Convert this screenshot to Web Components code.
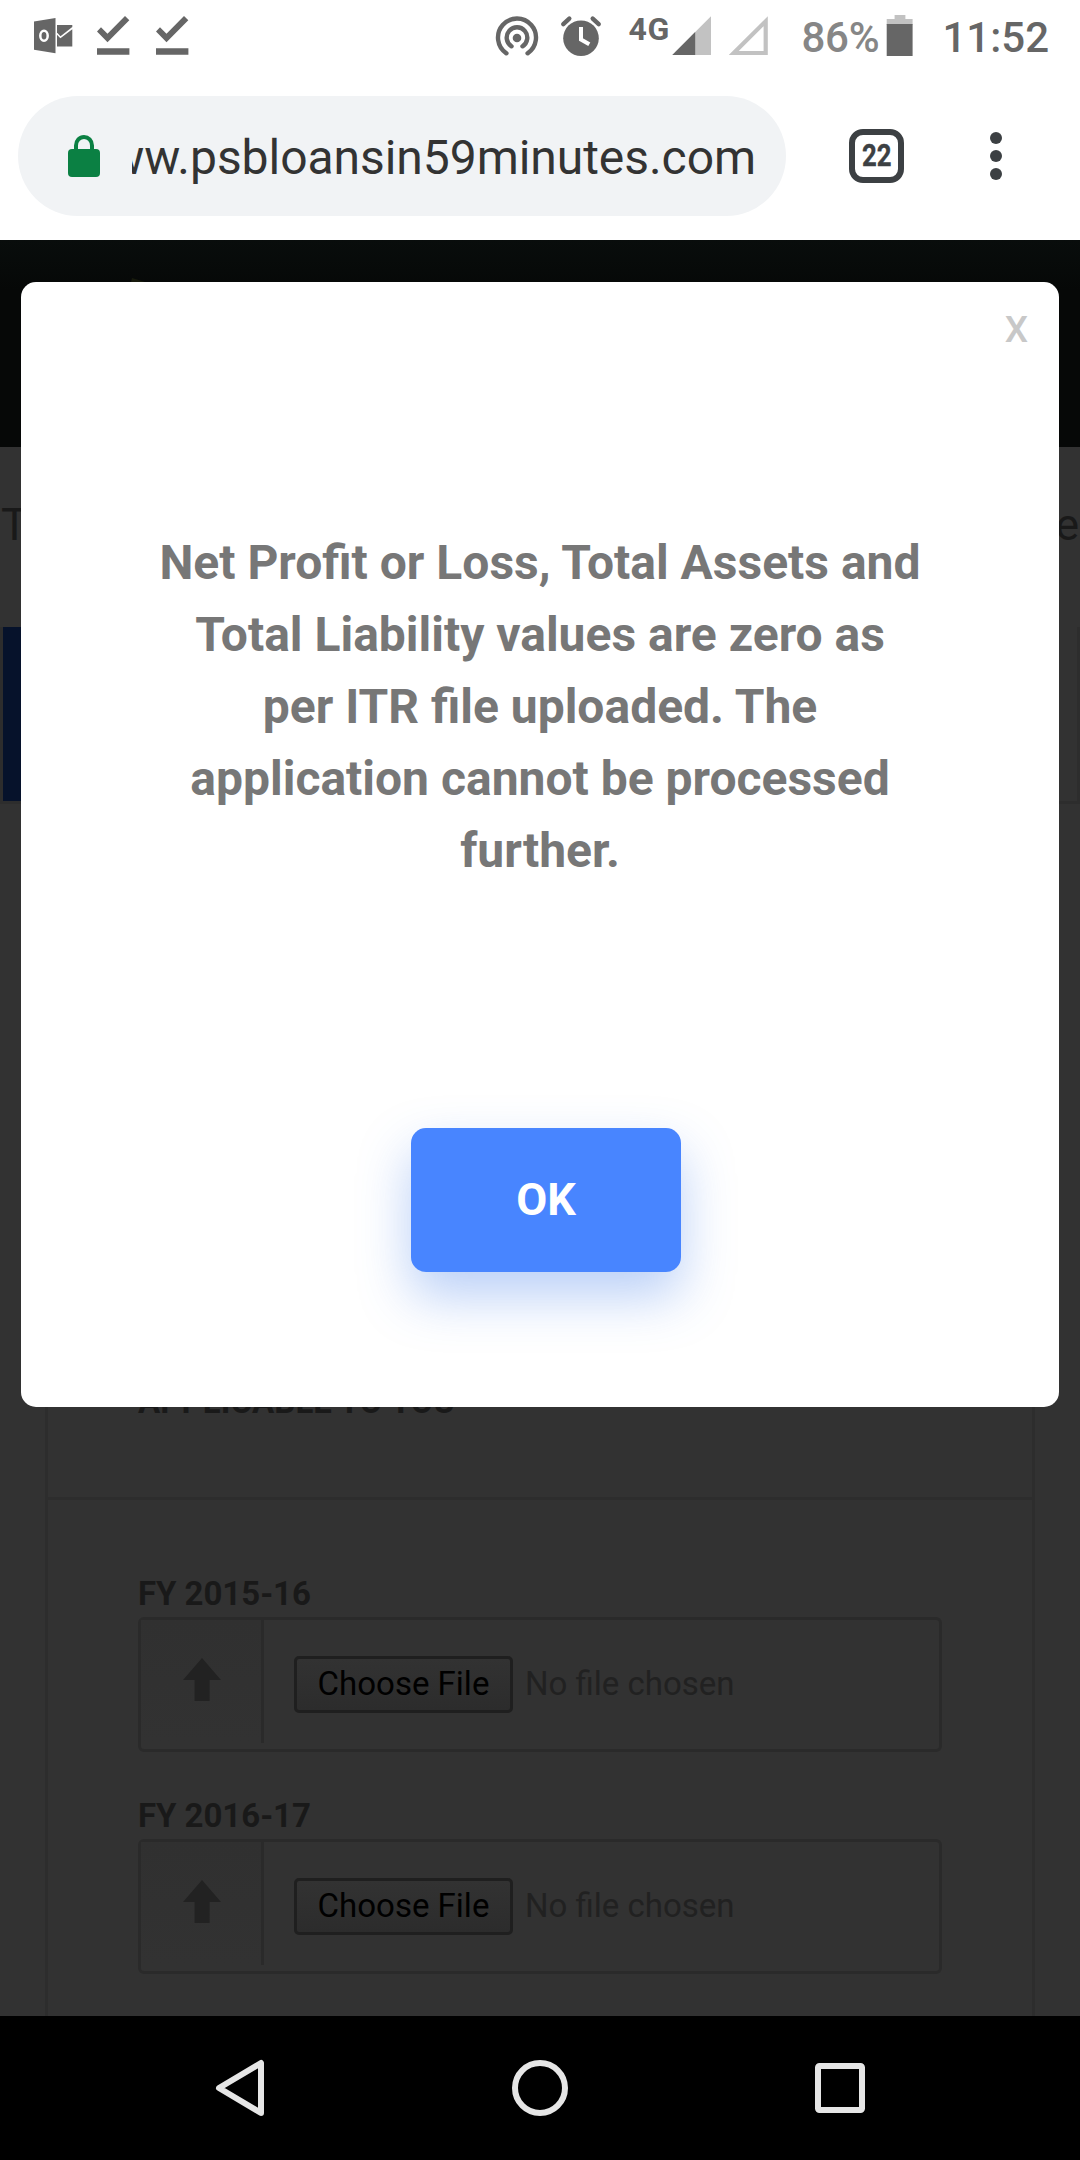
<!DOCTYPE html>
<html lang="en">
<head>
<meta charset="utf-8">
<title>psbloansin59minutes.com</title>
<style>
html,body{margin:0;padding:0;background:#fff}
body{font-family:Roboto,"Liberation Sans",sans-serif;width:1080px;height:2160px;overflow:hidden}
</style>
</head>
<body>
<phone-screen></phone-screen>
<script>
function define(name, html){
  const t=document.createElement('template');
  t.innerHTML=html;
  customElements.define(name,class extends HTMLElement{
    constructor(){
      super();
      this.attachShadow({mode:'open'}).appendChild(t.content.cloneNode(true));
    }
  });
}

define('status-bar',`
<style>
:host{display:flex;height:72px;box-sizing:border-box;padding:0 31px 0 33px;justify-content:space-between;color:#666;font-weight:500}
svg{display:block;flex:none}
.g{display:flex;align-items:flex-start}
.net{font-size:32px;line-height:36px;padding-top:11px;width:44px;margin-left:26px;white-space:nowrap;font-weight:700;letter-spacing:.6px}
.pct{font-size:42px;line-height:50px;padding-top:13px;width:76px;margin-left:32px;color:#868686;white-space:nowrap;font-weight:500;letter-spacing:-.2px}
.clock{font-size:42px;line-height:50px;padding-top:13px;margin-left:28px;white-space:nowrap}
</style>
<div class="g">
  <svg width="160" height="72" viewBox="33 0 160 72" fill="#666">
    <path d="M34 21.5L55.5 18V53.3L34 49.7Z"/>
    <ellipse cx="44" cy="35.8" rx="3.7" ry="5" fill="none" stroke="#fff" stroke-width="2.5"/>
    <path d="M57 25H72.3V27L60.5 36.3L57 32.6Z"/>
    <path d="M57 34.8L60.4 38.3L72.3 29.3V46.5H57Z"/>
    <path d="M97 31.5L101 27.2L107.5 33.8L125 16L129.3 20.3L107.5 42.2ZM97 48.2H129.4V54.8H97Z"/>
    <path transform="translate(59)" d="M97 31.5L101 27.2L107.5 33.8L125 16L129.3 20.3L107.5 42.2ZM97 48.2H129.4V54.8H97Z"/>
  </svg>
</div>
<div class="g">
  <svg width="107" height="72" viewBox="495 0 107 72" fill="none" stroke="#666" stroke-linecap="round">
    <circle cx="517" cy="38" r="4.3" fill="#666" stroke="none"/>
    <path stroke-width="4.4" d="M511.5 46.3A10.3 10.3 0 1 1 522.5 46.3"/>
    <path stroke-width="4.4" d="M506.4 53.3A19 19 0 1 1 527.6 53.3"/>
    <circle cx="581" cy="38.2" r="17.8" fill="#666" stroke="none"/>
    <path stroke="#fff" stroke-width="4" stroke-linecap="butt" d="M581 27V39.5L589.3 44.3"/>
    <path stroke-width="4.4" d="M563.3 24.2L569.3 18.6M598.7 24.2L592.7 18.6"/>
  </svg>
  <div class="net">4G</div>
  <svg width="97" height="72" viewBox="673 0 97 72">
    <path d="M673.3 55L712 16.3V55Z" fill="#c2c2c2"/>
    <path d="M673.3 55L696.2 32.1V55Z" fill="#666"/>
    <path d="M734.8 53H766.7V21.2Z" fill="none" stroke="#c2c2c2" stroke-width="4.2"/>
  </svg>
  <div class="pct">86%</div>
  <svg style="margin-left:9px" width="28" height="72" viewBox="887 0 28 72">
    <path d="M887.7 19H895.6V15H906.4V19H913.6V25H887.7Z" fill="#c2c2c2"/>
    <path d="M887.7 24H913.6V56H887.7Z" fill="#666"/>
  </svg>
  <div class="clock">11:52</div>
</div>`);

define('browser-bar',`
<style>
:host{display:flex;height:168px;box-sizing:border-box;padding:24px 0 24px 18px;align-items:center}
.pill{width:768px;height:120px;border-radius:60px;background:#f1f3f5;display:flex;align-items:center;flex:none}
.lock{margin:0 31px 0 49px;flex:none}
.url{width:624px;overflow:hidden;display:flex;justify-content:flex-end;font-size:48px;line-height:64px;color:#333;white-space:nowrap;letter-spacing:-.05px}
.url span{padding-top:4px;flex:none}
.tabs{width:55px;height:54px;box-sizing:border-box;border:6px solid #3c4043;border-radius:14px;margin-left:63px;display:flex;align-items:center;justify-content:center;font-weight:700;font-size:31px;line-height:36px;color:#3c4043;flex:none;-webkit-text-stroke:.4px #3c4043}
.tabs span{display:block;transform:scaleX(.83)}
.menu{margin-left:85px}
</style>
<div class="pill">
  <svg class="lock" width="34" height="48" viewBox="67 131 34 48">
    <rect x="68" y="148" width="32" height="28" rx="4" fill="#0b8043"/>
    <path d="M76 150V144.5A8 8.5 0 0 1 92 144.5V150" fill="none" stroke="#0b8043" stroke-width="4"/>
  </svg>
  <div class="url"><span>www.psbloansin59minutes.com</span></div>
</div>
<div class="tabs"><span>22</span></div>
<svg class="menu" width="14" height="50" viewBox="0 0 14 50" fill="#3c4043"><circle cx="7" cy="7" r="6"/><circle cx="7" cy="25" r="6"/><circle cx="7" cy="43" r="6"/></svg>`);

define('file-field',`
<style>
:host{display:block;height:222px}
.label{font-size:33px;line-height:42px;height:48px;padding-top:4px;box-sizing:border-box;font-weight:700;color:#191919;letter-spacing:-.05px}
.box{box-sizing:border-box;width:804px;height:135px;border:3px solid #2a2a2a;border-radius:6px;display:flex;align-items:flex-start}
.cell{width:120px;height:123px;border-right:3px solid #2a2a2a;background:linear-gradient(#303030,#323232);display:flex;flex:none}
.cell svg{margin:38px 0 0 42px}
.btn{box-sizing:border-box;width:219px;height:57px;margin:36px 0 0 30px;border:3px solid #1f1f1f;border-radius:5px;background:linear-gradient(#323232,#2c2c2c);color:#000;font-size:33px;line-height:49px;text-align:center;white-space:nowrap;flex:none}
.none{margin:36px 0 0 12px;font-size:33px;line-height:55px;color:#212121;white-space:nowrap}
</style>
<div class="label"><slot></slot></div>
<div class="box">
  <div class="cell"><svg width="38" height="43" viewBox="0 0 38 43"><path d="M19 0L38 22H26.6V43H11.6V22H0Z" fill="#222"/></svg></div>
  <div class="btn">Choose File</div>
  <div class="none">No file chosen</div>
</div>`);

define('loan-page',`
<style>
:host{display:flex;flex-direction:column;height:1776px;background:#323232;overflow:hidden}
.head{height:207px;background:linear-gradient(#090d0c,#060807 50px);flex:none}
.head svg{display:block;margin-left:131px}
.intro{height:180px;flex:none;display:flex;justify-content:space-between;padding:51px 1px 0;font-size:45px;line-height:54px;color:#191919;box-sizing:border-box}
.steps{height:177px;box-sizing:border-box;border:3px solid #2d2d2d;border-top:0;flex:none}
.steps div{width:300px;height:174px;background:#06122b}
.panel{width:990px;box-sizing:border-box;margin:96px 0 0 45px;height:1200px;border:3px solid #2d2d2d;flex:none}
.title{height:597px;box-sizing:border-box;border-bottom:3px solid #2d2d2d;padding:478px 0 0 90px;font-size:33px;line-height:42px;font-weight:700;color:#191919;letter-spacing:.05px}
.fields{padding:69px 0 0 90px}
</style>
<div class="head"><svg width="14" height="44" viewBox="0 0 14 44"><path d="M1 38L14 42H0Z" fill="#171a0c"/></svg></div>
<div class="intro"><span>T</span><span>e</span></div>
<div class="steps"><div></div></div>
<div class="panel">
  <div class="title">APPLICABLE TO YOU</div>
  <div class="fields"><file-field>FY 2015-16</file-field><file-field>FY 2016-17</file-field></div>
</div>`);

define('message-dialog',`
<style>
:host{display:flex;flex-direction:column;align-items:center;box-sizing:border-box;width:1038px;height:1125px;background:#fff;border-radius:15px}
.x{align-self:flex-end;margin:26px 31px 0 0;font-size:37px;line-height:44px;height:43px;color:#c8c8c8;font-weight:500}
.msg{width:768px;margin:176px 0 0;text-align:center;font-weight:700;font-size:48px;line-height:72px;color:#777}
.ok{width:270px;height:144px;margin:241px 0 0 12px;border-radius:15px;background:#4885ff;color:#fff;font-weight:700;font-size:45px;line-height:144px;text-align:center;box-shadow:0 24px 52px rgba(60,122,232,.36)}
</style>
<div class="x">X</div>
<div class="msg"><slot></slot></div>
<div class="ok">OK</div>`);

define('nav-bar',`
<style>
:host{display:flex;height:144px;background:#000;align-items:center;justify-content:center;gap:240px}
svg{display:block}
</style>
<svg width="60" height="60" viewBox="-30 -30 60 60"><path d="M21 -25V25L-21 0Z" fill="none" stroke="#e6e6e6" stroke-width="6" stroke-linejoin="round"/></svg>
<svg width="60" height="60" viewBox="-30 -30 60 60"><circle r="25" fill="none" stroke="#e6e6e6" stroke-width="6"/></svg>
<svg width="60" height="60" viewBox="-30 -30 60 60"><rect x="-22" y="-22" width="44" height="44" rx="1.5" fill="none" stroke="#e6e6e6" stroke-width="6"/></svg>`);

define('phone-screen',`
<style>
:host{display:flex;flex-direction:column;width:1080px;height:2160px;overflow:hidden;background:#fff}
.view{position:relative;height:1776px}
message-dialog{position:absolute;left:21px;top:42px}
</style>
<status-bar></status-bar>
<browser-bar></browser-bar>
<div class="view">
  <loan-page></loan-page>
  <message-dialog>Net Profit or Loss, Total Assets and Total Liability values are zero as per ITR file uploaded. The application cannot be processed further.</message-dialog>
</div>
<nav-bar></nav-bar>`);
</script>
</body>
</html>
